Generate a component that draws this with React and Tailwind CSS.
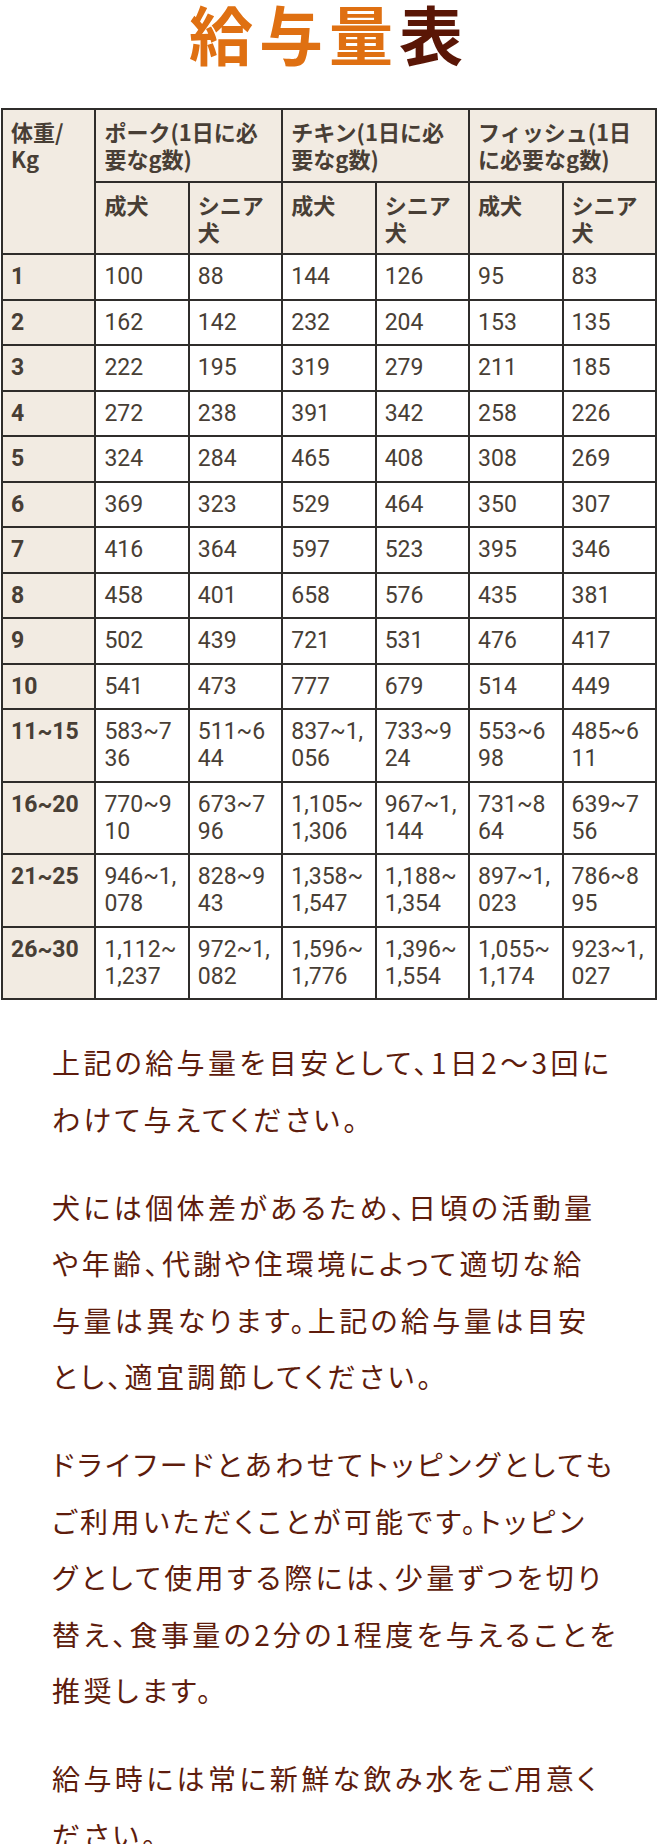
import React from 'react'

const rows = [
  ['1', '100', '88', '144', '126', '95', '83'],
  ['2', '162', '142', '232', '204', '153', '135'],
  ['3', '222', '195', '319', '279', '211', '185'],
  ['4', '272', '238', '391', '342', '258', '226'],
  ['5', '324', '284', '465', '408', '308', '269'],
  ['6', '369', '323', '529', '464', '350', '307'],
  ['7', '416', '364', '597', '523', '395', '346'],
  ['8', '458', '401', '658', '576', '435', '381'],
  ['9', '502', '439', '721', '531', '476', '417'],
  ['10', '541', '473', '777', '679', '514', '449'],
  ['11~15', '583~736', '511~644', '837~1,056', '733~924', '553~698', '485~611'],
  ['16~20', '770~910', '673~796', '1,105~1,306', '967~1,144', '731~864', '639~756'],
  ['21~25', '946~1,078', '828~943', '1,358~1,547', '1,188~1,354', '897~1,023', '786~895'],
  ['26~30', '1,112~1,237', '972~1,082', '1,596~1,776', '1,396~1,554', '1,055~1,174', '923~1,027'],
]

const paragraphs = [
  ['上記の給与量を目安として、1日2〜3回に', 'わけて与えてください。'],
  [
    '犬には個体差があるため、日頃の活動量',
    'や年齢、代謝や住環境によって適切な給',
    '与量は異なります。上記の給与量は目安',
    'とし、適宜調節してください。',
  ],
  [
    'ドライフードとあわせてトッピングとしても',
    'ご利用いただくことが可能です。トッピン',
    'グとして使用する際には、少量ずつを切り',
    '替え、食事量の2分の1程度を与えることを',
    '推奨します。',
  ],
  ['給与時には常に新鮮な飲み水をご用意く', 'ださい。'],
]

const cell = 'border-2 border-[#2f2d2b] px-2 pt-2 pb-[8.5px] align-top text-left break-all'
const head = `${cell} bg-[#f2ebe2] font-bold`
const num = "font-['Roboto','Noto_Sans_CJK_JP',sans-serif] text-[23px]"

export default function App() {
  return (
    <div className="w-[658px] bg-white font-['Noto_Sans_CJK_JP',sans-serif]">
      {/* Title */}
      <h1 className="mb-[43px] text-center text-[64px] leading-[64px] font-bold tracking-[6px]">
        <span className="text-[#df7012]">給与量</span>
        <span className="text-[#5a1606]">表</span>
      </h1>

      {/* Feeding table */}
      <div className="px-[1px] pt-[1px]">
        <table className="w-full table-fixed border-collapse text-[22px] leading-[27px] text-[#483e35]">
          <thead>
            <tr>
              <th rowSpan={2} className={head}>体重/<br />Kg</th>
              <th colSpan={2} className={head}>ポーク(1日に必要なg数)</th>
              <th colSpan={2} className={head}>チキン(1日に必要なg数)</th>
              <th colSpan={2} className={head}>フィッシュ(1日に必要なg数)</th>
            </tr>
            <tr>
              <th className={head}>成犬</th>
              <th className={head}>シニア犬</th>
              <th className={head}>成犬</th>
              <th className={head}>シニア犬</th>
              <th className={head}>成犬</th>
              <th className={head}>シニア犬</th>
            </tr>
          </thead>
          <tbody>
            {rows.map((r) => (
              <tr key={r[0]}>
                <td className={`${head} ${num}`}>{r[0]}</td>
                {r.slice(1).map((v, i) => (
                  <td key={i} className={`${cell} ${num} bg-white`}>{v}</td>
                ))}
              </tr>
            ))}
          </tbody>
        </table>
      </div>

      {/* Notes */}
      <div className="mt-[34px] px-[52px] text-[28px] leading-[56.5px] tracking-[3.4px] text-[#5e1c0c] [font-feature-settings:'palt']">
        {paragraphs.map((lines, i) => (
          <p key={i} className="mb-[31.5px] whitespace-nowrap">
            {lines.map((l, j) => (
              <React.Fragment key={j}>
                {l}
                {j < lines.length - 1 && <br />}
              </React.Fragment>
            ))}
          </p>
        ))}
      </div>
    </div>
  )
}
